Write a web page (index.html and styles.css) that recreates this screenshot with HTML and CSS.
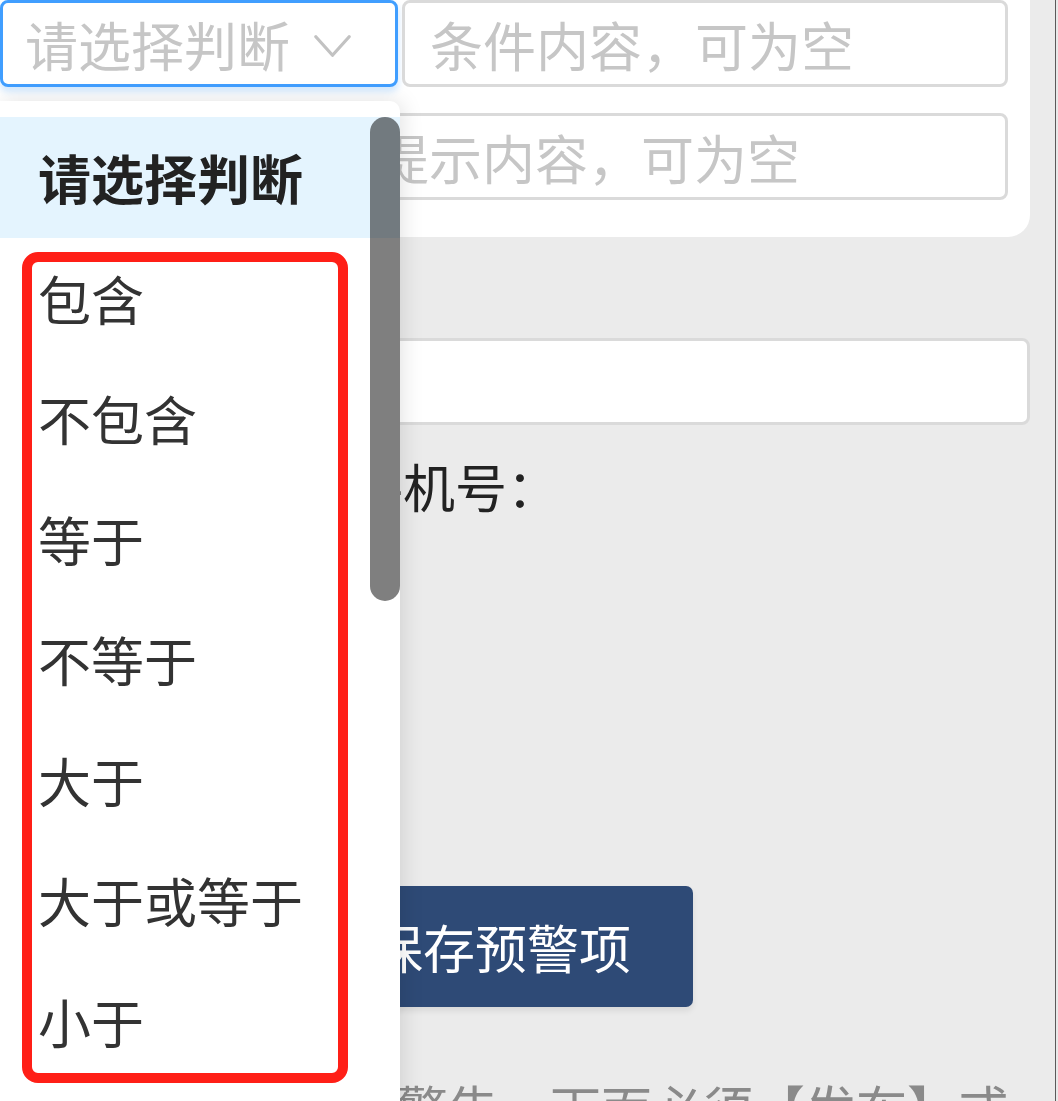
FILE: index.html
```html
<!DOCTYPE html>
<html lang="zh-CN">
<head>
<meta charset="utf-8">
<title>预警设置</title>
<link rel="stylesheet" href="styles.css">
</head>
<body>
<div class="page">
  <div class="card">
    <div class="cond-row">
      <div class="select is-focus">
        <span class="placeholder">请选择判断</span>
        <svg class="chevron" width="40" height="26" viewBox="0 0 40 26"><polyline points="2,3 20,23 38,3" fill="none" stroke="#c2c2c2" stroke-width="3.5" stroke-linecap="round" stroke-linejoin="round"/></svg>
      </div>
      <div class="input cond-input"><span class="placeholder">条件内容，可为空</span></div>
    </div>
    <div class="input tip-input"><span class="placeholder">提示内容，可为空</span></div>
  </div>

  <div class="section">
    <div class="field-label hidden-label">名称</div>
    <div class="input full-input"></div>
    <div class="field-label phone-label">接收手机号：</div>
    <div class="spacer"></div>
    <button class="btn-save">保存预警项</button>
    <p class="note">设置警告，下面必须【发布】或</p>
  </div>

  <div class="dropdown">
    <ul class="options">
      <li class="option is-selected">请选择判断</li>
      <li class="option">包含</li>
      <li class="option">不包含</li>
      <li class="option">等于</li>
      <li class="option">不等于</li>
      <li class="option">大于</li>
      <li class="option">大于或等于</li>
      <li class="option">小于</li>
      <li class="option">小于或等于</li>
    </ul>
    <div class="scroll-thumb"></div>
  </div>

  <div class="annotation"></div>
</div>
</body>
</html>
```

FILE: styles.css
```css
html, body {
  margin: 0;
  padding: 0;
  height: 100%;
  overflow: hidden;
  background: #e9e9e9;
}

.page {
  position: relative;
  width: 1055px;
  height: 1101px;
  background: #ebebeb;
  border-right: 1px solid #5a5a5a;
  font-family: "Noto Sans CJK SC", "Noto Sans", sans-serif;
  overflow: hidden;
}

.card {
  width: 1008px;
  padding: 0 22px 37px 0;
  background: #ffffff;
  border-bottom-right-radius: 22px;
}

.cond-row {
  display: flex;
  gap: 4px;
}

.select,
.input {
  box-sizing: border-box;
  height: 87px;
  border: 3px solid #dadada;
  border-radius: 8px;
  background: #fff;
  display: flex;
  align-items: center;
  font-size: 53px;
}

.select {
  width: 398px;
  padding: 0 44px 0 22px;
  justify-content: space-between;
}

.select.is-focus {
  border-color: #409eff;
  box-shadow: 0 4px 6px 1px rgba(64, 158, 255, 0.22);
}

.chevron {
  display: block;
  margin-top: 4px;
  width: 37px;
}

.placeholder {
  color: #c6c6c6;
  white-space: nowrap;
}

.cond-input {
  flex: 1;
  padding-left: 25px;
}

.tip-input {
  margin: 26px 0 0 348px;
  padding-left: 25px;
}

.section {
  padding: 0 25px 0 247px;
}

.field-label {
  font-size: 52px;
  line-height: 78px;
  color: #222;
  white-space: nowrap;
}

.hidden-label {
  margin-top: 20px;
}

.full-input {
  margin-top: 3px;
}

.phone-label {
  margin-top: 22px;
}

.spacer {
  height: 361px;
}

.btn-save {
  display: flex;
  align-items: center;
  height: 121px;
  margin-left: 62px;
  padding: 0 62px;
  border: none;
  border-radius: 7px;
  background: #2e4a76;
  color: #fff;
  font-family: inherit;
  font-size: 52px;
  box-shadow: 0 4px 6px rgba(0, 0, 0, 0.08);
}

.note {
  margin: 61px 0 0 48px;
  font-size: 51px;
  line-height: 78px;
  color: #8a8a8a;
  white-space: nowrap;
}

.dropdown {
  position: absolute;
  left: 0;
  top: 101px;
  width: 400px;
  height: 1060px;
  padding-top: 16px;
  box-sizing: border-box;
  background: #fff;
  border-top-right-radius: 10px;
  box-shadow: 2px 0 22px rgba(0, 0, 0, 0.12);
}

.options {
  list-style: none;
  margin: 0;
  padding: 0;
}

.option {
  height: 120.5px;
  line-height: 120px;
  padding-left: 38px;
  font-size: 53px;
  color: #333;
  white-space: nowrap;
}

.option.is-selected {
  background: #e4f4fe;
  color: #222;
  font-weight: 700;
}

.scroll-thumb {
  position: absolute;
  right: 0;
  top: 16px;
  width: 30px;
  height: 484px;
  border-radius: 15px;
  background: rgba(0, 0, 0, 0.5);
}

.annotation {
  position: absolute;
  left: 22px;
  top: 252px;
  width: 326px;
  height: 831px;
  box-sizing: border-box;
  border: 10px solid #ff1f17;
  border-radius: 16px;
}
```
